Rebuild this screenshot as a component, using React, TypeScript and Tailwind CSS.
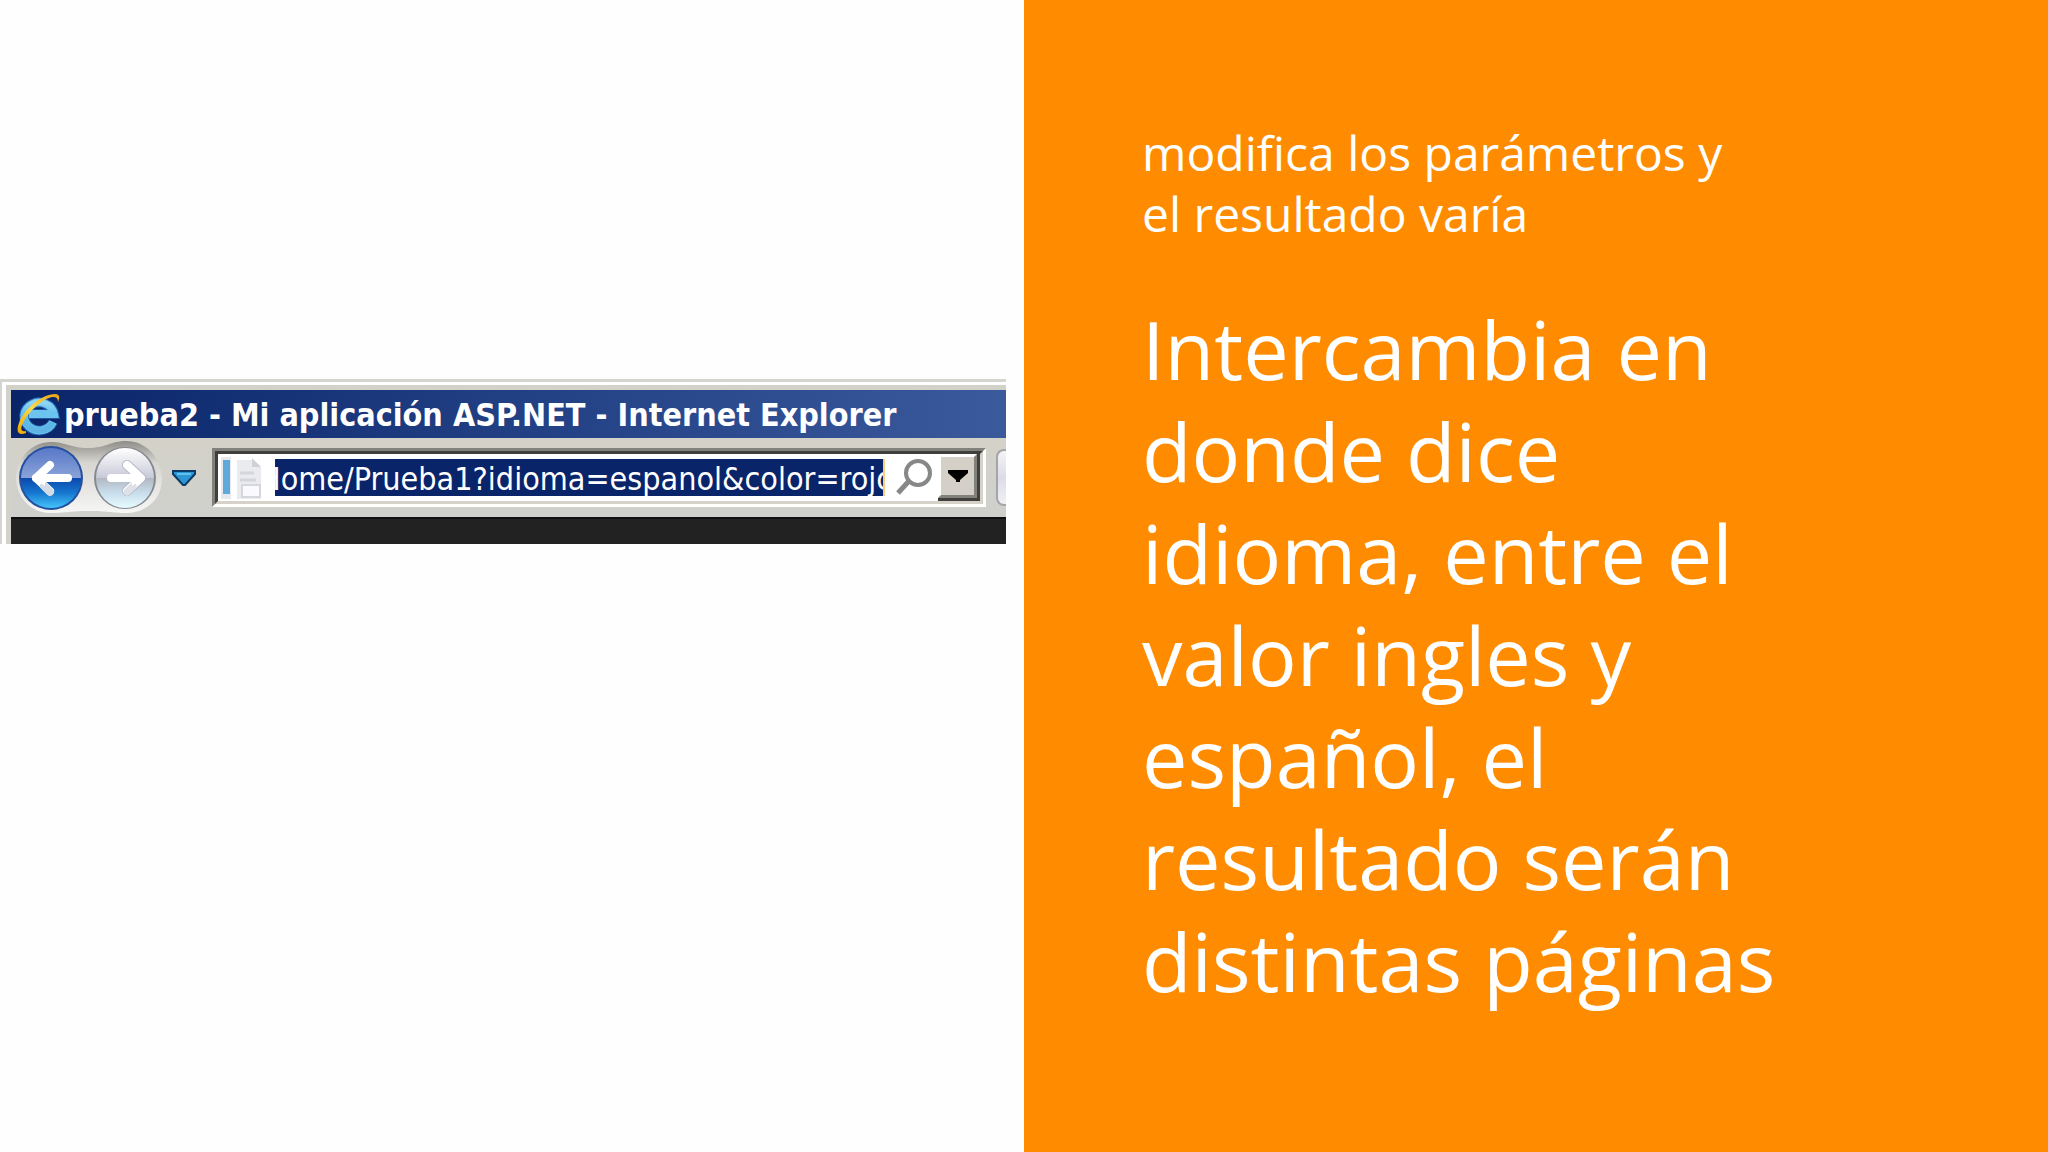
import { useState } from 'react';

function IeLogo() {
  return (
    <svg viewBox="0 0 44 44" className="h-11 w-11 shrink-0" aria-hidden="true">
      <defs>
        <linearGradient id="ieBlue" x1="0" y1="0" x2="0" y2="1">
          <stop offset="0" stopColor="#8fd6f4" />
          <stop offset="0.5" stopColor="#5bbcec" />
          <stop offset="1" stopColor="#5fb4e4" />
        </linearGradient>
        <linearGradient id="ieGold" x1="0" y1="1" x2="1" y2="0">
          <stop offset="0" stopColor="#f0a800" />
          <stop offset="0.5" stopColor="#ffd84a" />
          <stop offset="1" stopColor="#e6a312" />
        </linearGradient>
      </defs>
      <path d="M37 30 A15 14 0 1 1 38 22 L13 22" fill="none" stroke="#1d5aa5" strokeWidth="10" />
      <path d="M37 30 A15 14 0 1 1 38 22 L13 22" fill="none" stroke="#6cc3ee" strokeWidth="8" />
      <path d="M37 30 A15 14 0 1 1 38 22" fill="none" stroke="url(#ieBlue)" strokeWidth="6" />
      <path d="M10 41 C4 44 -1 41 3 31 C8 17 26 2 39 2 C44 2 44 6 42 10 C42 6 40 5 37 5 C27 6 12 20 7 31 C4 37 5 40 10 39 Z" fill="url(#ieGold)" />
    </svg>
  );
}

function NavPlate() {
  return (
    <svg viewBox="0 0 148 78" className="absolute inset-0 h-full w-full" aria-hidden="true">
      <defs>
        <linearGradient id="plate" x1="0" y1="0" x2="0" y2="1">
          <stop offset="0" stopColor="#8e8d88" />
          <stop offset="0.12" stopColor="#aaa9a4" />
          <stop offset="0.3" stopColor="#d6d5d0" />
          <stop offset="0.6" stopColor="#e4e3e0" />
          <stop offset="1" stopColor="#f6f6f5" />
        </linearGradient>
      </defs>
      <path
        d="M0 40 C1 18 16 3 35 3 C50 3 54 9 72 9 C90 9 95 2 110 2 C130 2 145 18 146 40 C146 60 130 74 110 74 C96 74 92 72 72 72 C54 72 50 74 35 74 C16 74 1 60 0 40 Z"
        fill="url(#plate)"
      />
    </svg>
  );
}

function BackIcon() {
  return (
    <svg viewBox="0 0 66 66" className="h-full w-full" aria-hidden="true">
      <defs>
        <linearGradient id="backTop" x1="0" y1="0" x2="0" y2="1">
          <stop offset="0" stopColor="#5878c8" />
          <stop offset="1" stopColor="#8ba3d8" />
        </linearGradient>
        <linearGradient id="backBottom" x1="0" y1="0" x2="0" y2="1">
          <stop offset="0" stopColor="#0c48ac" />
          <stop offset="0.5" stopColor="#1678d0" />
          <stop offset="1" stopColor="#45c4fa" />
        </linearGradient>
      </defs>
      <circle cx="33" cy="33" r="32" fill="#24509f" />
      <path d="M3 33 A30 30 0 0 1 63 33 Z" fill="url(#backTop)" />
      <path d="M3 33 A30 30 0 0 0 63 33 Z" fill="url(#backBottom)" />
      <path d="M32 20 L18 33 L32 46" fill="none" stroke="#fff" strokeWidth="8" strokeLinecap="round" strokeLinejoin="round" />
      <path d="M26 41 L32 47" stroke="#d5dbe4" strokeWidth="8" strokeLinecap="round" />
      <path d="M18 33 H50" stroke="#fff" strokeWidth="8" strokeLinecap="round" />
      <path d="M15 33 L27 23 V41 Z" fill="#fff" />
    </svg>
  );
}

function ForwardIcon() {
  return (
    <svg viewBox="0 0 66 66" className="h-full w-full" aria-hidden="true">
      <defs>
        <linearGradient id="fwdTop" x1="0" y1="0" x2="0" y2="1">
          <stop offset="0" stopColor="#ffffff" />
          <stop offset="1" stopColor="#c8c9d8" />
        </linearGradient>
        <linearGradient id="fwdBottom" x1="0" y1="0" x2="0" y2="1">
          <stop offset="0" stopColor="#b2b7c1" />
          <stop offset="0.5" stopColor="#c8deec" />
          <stop offset="1" stopColor="#e8fbff" />
        </linearGradient>
      </defs>
      <circle cx="33" cy="33" r="31" fill="#85898f" />
      <path d="M4 33 A29 30 0 0 1 62 33 Z" fill="url(#fwdTop)" />
      <path d="M4 33 A29 30 0 0 0 62 33 Z" fill="url(#fwdBottom)" />
      <path d="M35 20 L49 33 L35 46" fill="none" stroke="#b4bac6" strokeWidth="10" strokeLinecap="round" strokeLinejoin="round" />
      <path d="M35 20 L49 33 L35 46" fill="none" stroke="#fff" strokeWidth="8" strokeLinecap="round" strokeLinejoin="round" />
      <path d="M41 41 L35 47" stroke="#dde1e7" strokeWidth="7" strokeLinecap="round" />
      <path d="M19 33 H48" stroke="#fff" strokeWidth="8" strokeLinecap="round" />
      <path d="M52 33 L40 23 V41 Z" fill="#fff" />
    </svg>
  );
}

function PageIcon() {
  return (
    <svg viewBox="0 0 44 46" className="h-[46px] w-11 shrink-0" aria-hidden="true">
      <rect x="3" y="2" width="10" height="42" fill="#e5e9ed" />
      <rect x="5" y="5" width="7" height="34" fill="#5fa8da" />
      <path d="M19 5 H34 L43 12 V44 H19 Z" fill="#e9ebee" />
      <path d="M34 3 L43 12 H34 Z" fill="#cfd1d4" />
      <path d="M22 18 H36 M22 25 H38" stroke="#d4d6db" strokeWidth="3" />
      <rect x="24" y="30" width="18" height="12" fill="#fafafc" stroke="#d5d7dc" strokeWidth="2" />
    </svg>
  );
}

function SearchIcon() {
  return (
    <svg viewBox="0 0 38 38" className="h-[38px] w-[38px]" aria-hidden="true">
      <circle cx="23" cy="14" r="12" fill="none" stroke="#878787" strokeWidth="4" />
      <path d="M14 22 L3 34" stroke="#878787" strokeWidth="5" />
    </svg>
  );
}

function AddressBar() {
  const [url, setUrl] = useState('Home/Prueba1?idioma=espanol&color=rojo');

  return (
    <div className="min-w-0 flex-1 border-3 border-t-[#82827d] border-l-[#82827d] border-r-[#fffffb] border-b-[#fffffb]">
      <div className="flex items-center border-3 border-t-[#403f3c] border-l-[#403f3c] border-r-[#d6d2c9] border-b-[#d6d2c9] bg-white">
        <PageIcon />
        <input
          aria-label="Dirección"
          value={url}
          onChange={(e) => setUrl(e.target.value)}
          className="ml-[13px] h-[37px] min-w-0 flex-1 border-r-2 border-[#f5cf86] bg-[#0a246a] pt-[2px] indent-[-16px] text-[32px] leading-[35px] text-white outline-none"
        />
        <button aria-label="Buscar" className="mr-[5px] ml-[10px] shrink-0">
          <SearchIcon />
        </button>
        <button
          aria-label="Mostrar direcciones"
          className="flex h-[47px] w-[42px] shrink-0 border-r-3 border-b-3 border-[#403f3c]"
        >
          <span className="flex h-full w-full items-center justify-center border-3 border-t-white border-l-white border-r-[#82827d] border-b-[#82827d] bg-[#d4d0c8]">
            <svg viewBox="0 0 20 12" className="h-3 w-5" aria-hidden="true">
              <path d="M0 0 H20 V3 L12 10 V12 H8 V10 L0 3 Z" fill="#000" />
            </svg>
          </span>
        </button>
      </div>
    </div>
  );
}

function BrowserWindow() {
  return (
    <div className="mr-[18px] overflow-hidden border-t-3 border-l-2 border-[#d5d4d1] font-['DejaVu_Sans_Condensed','DejaVu_Sans',sans-serif]">
      <div className="border-t-3 border-l-4 border-white bg-[#d3d2ca]">
        <div className="ml-[5px] pt-[5px]">
          <div className="flex h-12 items-center gap-1 bg-linear-to-r from-[#0a246a] to-[#3a5a9c] pl-[5px] text-white">
            <IeLogo />
            <h2 className="pt-[2px] text-[32px] font-bold whitespace-nowrap">
              prueba2 - Mi aplicación ASP.NET - Internet Explorer
            </h2>
          </div>
          <div className="flex h-[79px] items-center bg-linear-to-b from-[#d4d2c8] to-[#cfd0cd] pl-[5px]">
            <div className="relative flex h-[78px] w-[148px] shrink-0 items-center gap-2 pl-[2px]">
              <NavPlate />
              <button aria-label="Atrás" className="relative h-[66px] w-[66px]">
                <BackIcon />
              </button>
              <button aria-label="Adelante" className="relative h-[66px] w-[66px]">
                <ForwardIcon />
              </button>
            </div>
            <button aria-label="Páginas recientes" className="mr-4 ml-2 shrink-0">
              <svg viewBox="0 0 24 18" className="h-[18px] w-6" aria-hidden="true">
                <path d="M1 2 H23 V5 L13 16 H11 L1 5 Z" fill="#2c97d4" stroke="#0c3c66" strokeWidth="2" />
                <path d="M5 5 H19" stroke="#62c3ef" strokeWidth="2" />
              </svg>
            </button>
            <AddressBar />
            <button
              aria-label="Actualizar"
              className="ml-[10px] h-[57px] w-[10px] shrink-0 rounded-l-lg border-2 border-r-0 border-[#a5a5a8] bg-linear-to-b from-[#f4f4f7] via-[#dcdce8] to-[#f0f0f5]"
            />
          </div>
          <div className="h-[27px] border-t-2 border-[#111010] bg-[#232222]" />
        </div>
      </div>
    </div>
  );
}

export default function App() {
  return (
    <main className="flex min-h-screen items-stretch bg-[#fefefe]">
      <section className="w-1/2 min-w-0 pt-[379px]">
        <BrowserWindow />
      </section>
      <section className="w-1/2 bg-[#ff8c00] px-[118px] pt-[122px] font-['Open_Sans',sans-serif] text-white">
        <p className="text-[48px] leading-[61px]">
          modifica los parámetros y<br />
          el resultado varía
        </p>
        <h1 className="mt-[54px] text-[81px] leading-[102px]">
          Intercambia en
          <br />
          donde dice
          <br />
          idioma, entre el
          <br />
          valor ingles y
          <br />
          español, el
          <br />
          resultado serán
          <br />
          distintas páginas
        </h1>
      </section>
    </main>
  );
}
